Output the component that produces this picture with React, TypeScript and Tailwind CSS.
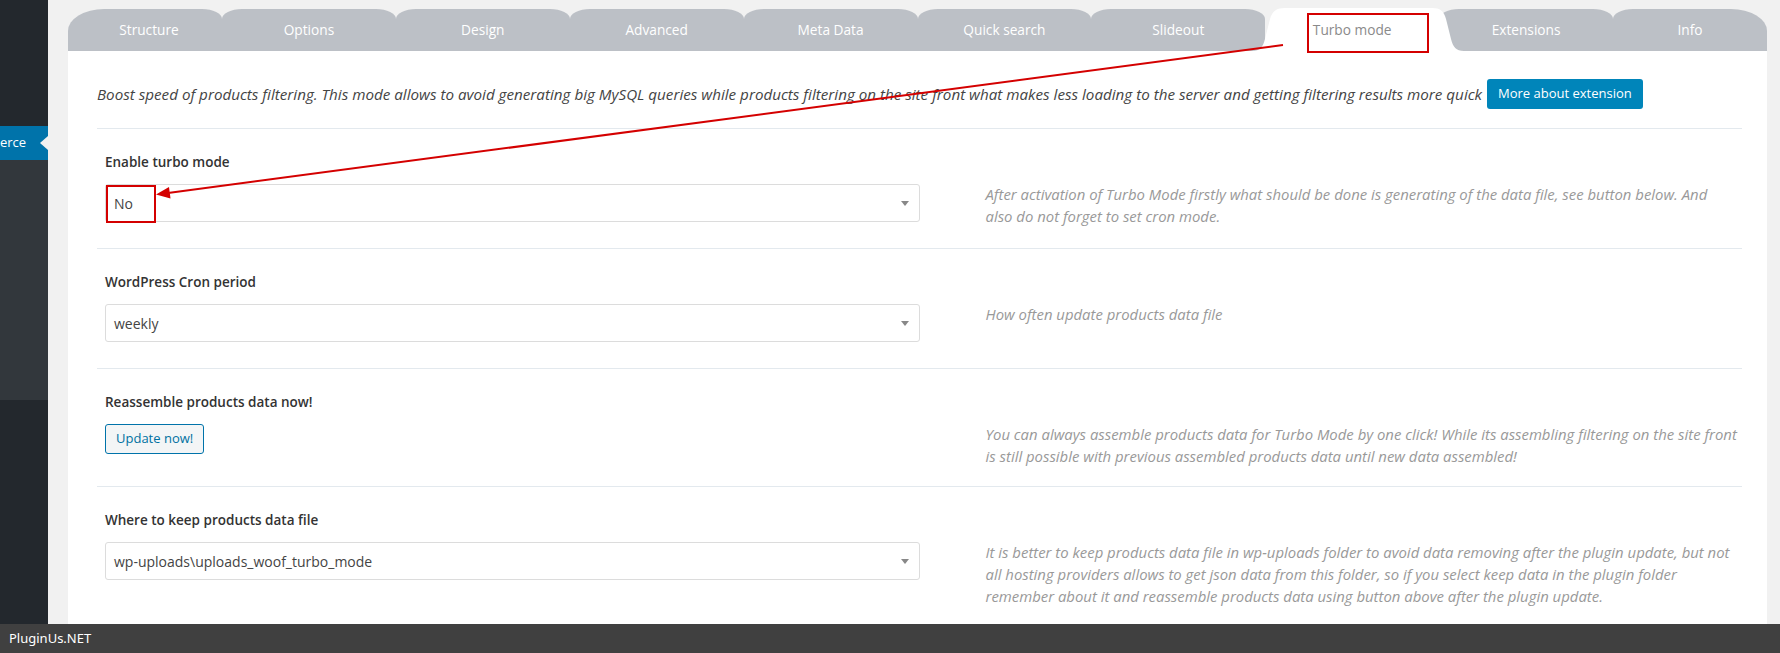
import React from "react";

const tabs = [
  "Structure",
  "Options",
  "Design",
  "Advanced",
  "Meta Data",
  "Quick search",
  "Slideout",
  "Turbo mode",
  "Extensions",
  "Info",
];

function Tab({ label, index }: { label: string; index: number }) {
  const active = label === "Turbo mode";
  const first = index === 0;
  const last = index === tabs.length - 1;
  const width = first ? "w-[154px] shrink-0 pl-[8px]" : last ? "w-[154px] shrink-0" : "flex-1";
  if (active) {
    return (
      <div className={`${width} relative z-10 flex h-[42px] items-center justify-center`}>
        <svg
          className="absolute bottom-0 left-[-13px] h-[43px] w-[212px]"
          viewBox="0 0 212 43"
          preserveAspectRatio="none"
        >
          <path
            d="M0,43 C8,43 11,39 13,31 L18,11 C20,3 25,0 33,0 L180,0 C188,0 192,3 194,11 L199,31 C201,39 204,43 212,43 Z"
            fill="#ffffff"
          />
        </svg>
        <span className="relative text-[13.7px] text-[#8a8a8a]">{label}</span>
      </div>
    );
  }
  const radius = first
    ? "rounded-tl-[36px_22px] rounded-tr-[20px_10px]"
    : last
    ? "rounded-tl-[20px_10px] rounded-tr-[36px_22px]"
    : "rounded-tl-[20px_10px] rounded-tr-[20px_10px]";
  return (
    <div
      className={`${width} ${radius} flex h-[42px] items-center justify-center bg-[#bcc0c6] text-[13.7px] text-white`}
    >
      {label}
    </div>
  );
}

function Select({ value }: { value: string }) {
  return (
    <div className="flex h-[38px] w-full items-center justify-between rounded-[3px] border border-[#dcdcdc] bg-white pl-[8px] pr-[10px] text-[14px] text-[#444]">
      <span>{value}</span>
      <svg width="8" height="5" viewBox="0 0 8 5">
        <path d="M0,0 L8,0 L4,5 Z" fill="#888" />
      </svg>
    </div>
  );
}

function Row({
  label,
  control,
  help,
  tight,
}: {
  label: string;
  control: React.ReactNode;
  help: string[];
  tight?: boolean;
}) {
  return (
    <div
      className={`grid grid-cols-2 border-t border-[#e3e9ee] px-[8px] pt-[23px] ${
        tight ? "pb-[19px]" : "pb-[21px]"
      }`}
    >
      <div className="pb-[5px]">
        <div className="h-[20px] text-[13.5px] font-semibold leading-[20px] text-[#333]">{label}</div>
        <div className="mt-[12px]">{control}</div>
      </div>
      <div className="mr-[-20px] pl-[66px] pt-[31px] text-[14.9px] italic leading-[22px] text-[#999]">
        {help.map((line) => (
          <div key={line} className="whitespace-nowrap">
            {line}
          </div>
        ))}
      </div>
    </div>
  );
}

export default function App() {
  return (
    <div className="relative flex h-[653px] w-[1780px] flex-col overflow-hidden bg-[#f1f1f1] font-['Open_Sans',sans-serif]">
      <div className="flex min-h-0 flex-1">
        {/* sidebar */}
        <div className="flex w-[48px] shrink-0 flex-col bg-[#23282d]">
          <div className="h-[126px]" />
          <div className="relative flex h-[34px] items-center bg-[#0073aa] font-['Open_Sans',sans-serif] text-[13px] text-white">
            <span>erce</span>
            <span className="absolute right-0 top-1/2 h-0 w-0 -translate-y-1/2 border-y-[7px] border-r-[8px] border-y-transparent border-r-[#f1f1f1]" />
          </div>
          <div className="h-[240px] bg-[#32373c]" />
          <div className="flex-1" />
        </div>
        {/* main */}
        <div className="ml-[20px] flex w-[1699px] shrink-0 flex-col pt-[9px]">
          <div className="flex">
            {tabs.map((t, i) => (
              <Tab key={t} label={t} index={i} />
            ))}
          </div>
          <div className="flex-1 bg-white pl-[29px] pr-[25px]">
            <div className="flex items-center pb-[19px] pt-[28px]">
              <span className="text-[15.2px] italic text-[#444]">
                Boost speed of products filtering. This mode allows to avoid generating big MySQL queries while products filtering on the site front what makes less loading to the server and getting filtering results more quick
              </span>
              <button className="ml-[5px] h-[30px] shrink-0 rounded-[3px] bg-[#0085ba] px-[11px] text-[13px] text-white">
                More about extension
              </button>
            </div>
            <Row
              label="Enable turbo mode"
              control={<Select value="No" />}
              help={[
                "After activation of Turbo Mode firstly what should be done is generating of the data file, see button below. And",
                "also do not forget to set cron mode.",
              ]}
            />
            <Row
              label="WordPress Cron period"
              control={<Select value="weekly" />}
              help={["How often update products data file"]}
            />
            <Row
              tight
              label="Reassemble products data now!"
              control={
                <button className="h-[30px] rounded-[3px] border border-[#0073aa] bg-[#f3f5f6] px-[10px] text-[13px] text-[#0071a1]">
                  Update now!
                </button>
              }
              help={[
                "You can always assemble products data for Turbo Mode by one click! While its assembling filtering on the site front",
                "is still possible with previous assembled products data until new data assembled!",
              ]}
            />
            <Row
              label="Where to keep products data file"
              control={<Select value="wp-uploads\uploads_woof_turbo_mode" />}
              help={[
                "It is better to keep products data file in wp-uploads folder to avoid data removing after the plugin update, but not",
                "all hosting providers allows to get json data from this folder, so if you select keep data in the plugin folder",
                "remember about it and reassemble products data using button above after the plugin update.",
              ]}
            />
          </div>
        </div>
      </div>
      {/* footer */}
      <div className="relative z-30 flex h-[29px] shrink-0 items-center bg-[#404040] pl-[9px] font-['Noto_Sans',sans-serif] text-[13px] text-white">
        PluginUs.NET
      </div>
      {/* annotations */}
      <svg className="pointer-events-none absolute left-0 top-0 z-20" width="1780" height="653">
        <rect x="1308" y="14" width="120" height="38" fill="none" stroke="#d40000" strokeWidth="2" />
        <rect x="107" y="186" width="48" height="36" fill="none" stroke="#d40000" strokeWidth="2" />
        <line x1="1283" y1="45" x2="168" y2="193" stroke="#d40000" strokeWidth="2" />
        <path d="M156,194.5 L169,187 L170.5,198.5 Z" fill="#d40000" />
      </svg>
    </div>
  );
}
